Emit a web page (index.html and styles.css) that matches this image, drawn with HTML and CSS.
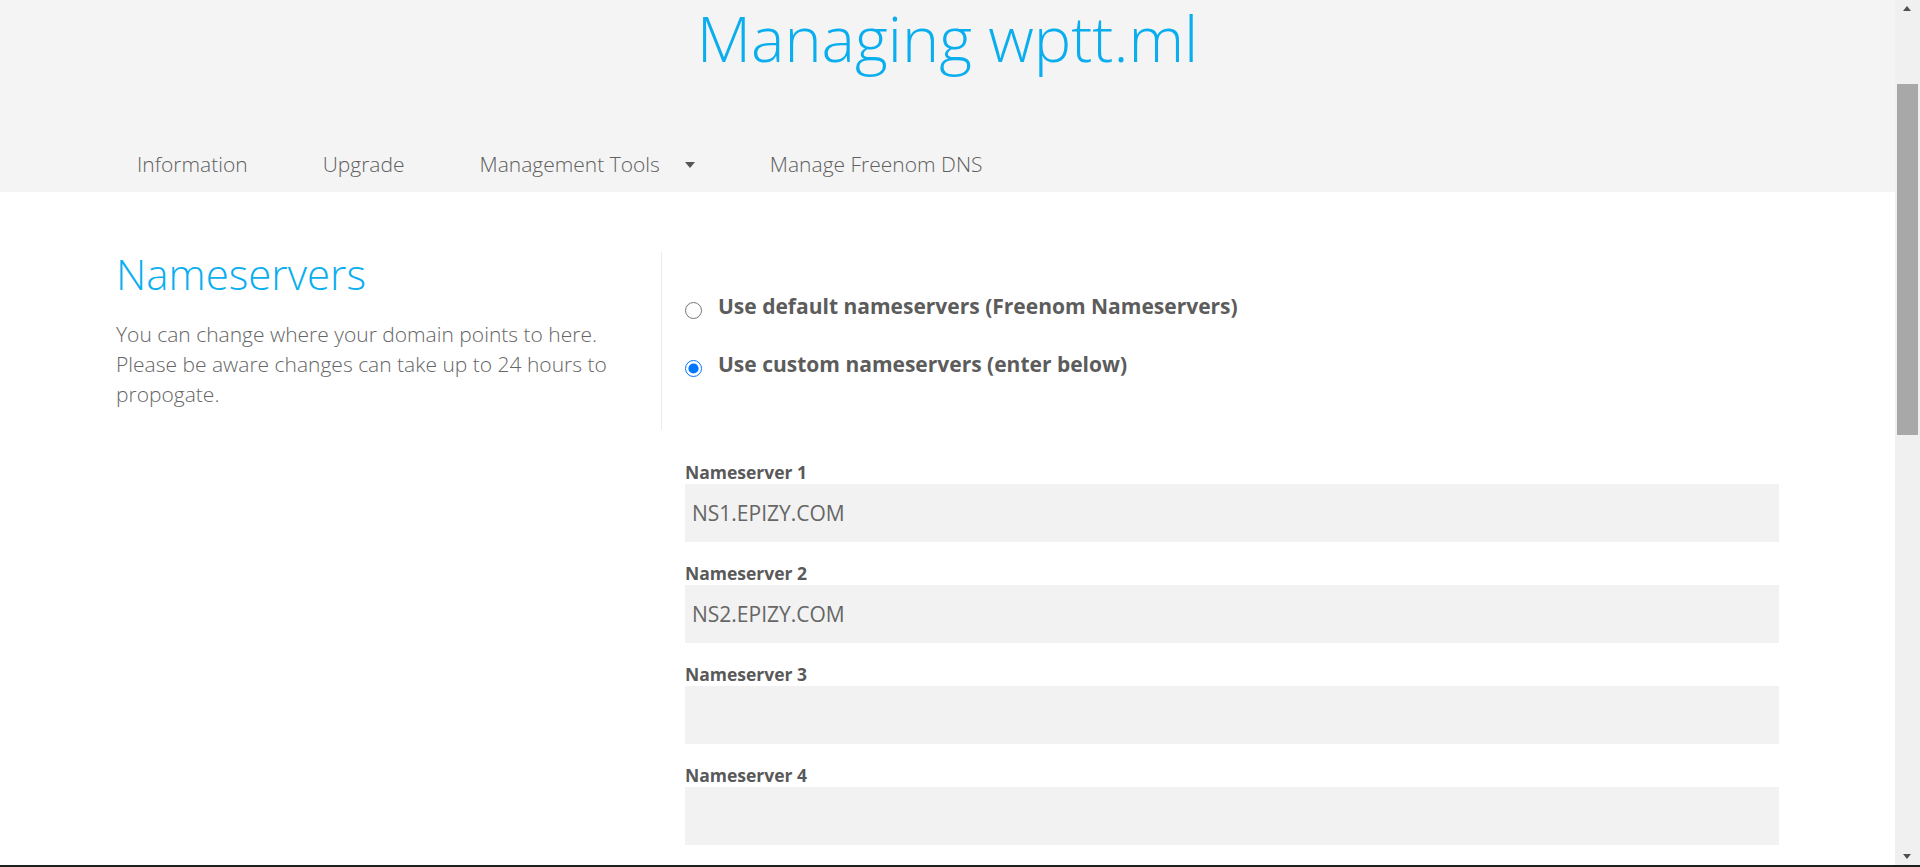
FILE: index.html
```html
<!DOCTYPE html>
<html lang="en">
<head>
<meta charset="utf-8">
<title>Managing wptt.ml</title>
<link rel="stylesheet" href="styles.css">
</head>
<body>
<div class="page">
  <header class="header">
    <h1 class="title">Managing wptt.ml</h1>
    <nav class="nav">
      <a class="nav-item" href="#">Information</a>
      <a class="nav-item" href="#">Upgrade</a>
      <a class="nav-item nav-dropdown" href="#">Management Tools <span class="caret"></span></a>
      <a class="nav-item" href="#">Manage Freenom DNS</a>
    </nav>
  </header>
  <main class="content">
    <section class="intro">
      <h2 class="intro-title">Nameservers</h2>
      <p class="intro-text">You can change where your domain points to here. Please be aware changes can take up to 24 hours to propogate.</p>
    </section>
    <section class="options">
      <label class="option">
        <input type="radio" name="nsmode" class="radio">
        <span class="option-text">Use default nameservers (Freenom Nameservers)</span>
      </label>
      <label class="option">
        <input type="radio" name="nsmode" class="radio" checked>
        <span class="option-text">Use custom nameservers (enter below)</span>
      </label>
    </section>
    <section class="fields">
      <div class="field">
        <label class="field-label">Nameserver 1</label>
        <input class="field-input" type="text" value="NS1.EPIZY.COM">
      </div>
      <div class="field">
        <label class="field-label">Nameserver 2</label>
        <input class="field-input" type="text" value="NS2.EPIZY.COM">
      </div>
      <div class="field">
        <label class="field-label">Nameserver 3</label>
        <input class="field-input" type="text" value="">
      </div>
      <div class="field">
        <label class="field-label">Nameserver 4</label>
        <input class="field-input" type="text" value="">
      </div>
    </section>
  </main>
</div>
<div class="scrollbar">
  <span class="arrow arrow-up"></span>
  <span class="thumb"></span>
  <span class="arrow arrow-down"></span>
</div>
<div class="bottom-line"></div>
</body>
</html>
```

FILE: styles.css
```css
html, body {
  margin: 0;
  padding: 0;
  height: 100%;
  overflow: hidden;
  background: #ffffff;
}

body {
  font-family: "Open Sans", "Liberation Sans", sans-serif;
  color: #666666;
}

.page {
  width: calc(100% - 25px);
}

/* Header */
.header {
  background: #f4f4f4;
  height: 192px;
  padding-top: 6px;
  box-sizing: border-box;
}

.title {
  margin: 0;
  font-size: 63px;
  line-height: 63px;
  font-weight: 300;
  color: #0aaeef;
  text-align: center;
}

.nav {
  display: flex;
  margin-top: 80px;
  padding-left: 99px;
}

.nav-item {
  display: flex;
  align-items: center;
  padding: 0 37px 0 38px;
  font-size: 21px;
  line-height: 30px;
  font-weight: 300;
  color: #5f5f5f;
  text-decoration: none;
}

.caret {
  display: inline-block;
  width: 0;
  height: 0;
  margin-left: 25px;
  margin-top: 2px;
  border-left: 5.5px solid transparent;
  border-right: 5.5px solid transparent;
  border-top: 6px solid #555555;
}

/* Content */
.content {
  display: grid;
  grid-template-columns: 546px 1fr;
  padding: 60px 116px 0 116px;
}

.intro {
  border-right: 1px solid #ececec;
  padding-right: 30px;
  padding-bottom: 21px;
}

.intro-title {
  margin: 0;
  font-size: 42px;
  line-height: 44px;
  font-weight: 300;
  color: #0aaeef;
}

.intro-text {
  margin: 23px 0 0;
  font-size: 21px;
  line-height: 30px;
  font-weight: 300;
  color: #666666;
}

.options {
  display: flex;
  flex-direction: column;
  gap: 28px;
  padding: 39px 0 51px 23px;
}

.option {
  display: flex;
  align-items: flex-start;
  font-size: 21px;
  line-height: 30px;
  font-weight: 700;
  color: #5c5c5c;
}

.radio {
  width: 17px;
  height: 17px;
  margin: 11px 16px 0 0;
  flex: none;
}

.fields {
  grid-column: 2;
  padding: 30px 0 0 23px;
  display: flex;
  flex-direction: column;
  gap: 19px;
}

.field {
  display: flex;
  flex-direction: column;
}

.field-label {
  font-size: 17.5px;
  line-height: 24px;
  font-weight: 700;
  color: #595959;
}

.field-input {
  height: 58px;
  border: none;
  background: #f2f2f2;
  padding: 0 7px;
  font-family: "Open Sans", "Liberation Sans", sans-serif;
  font-size: 21px;
  color: #666666;
  outline: none;
}

/* Fake scrollbar overlay */
.scrollbar {
  position: fixed;
  top: 0;
  right: 0;
  width: 25px;
  height: 100%;
  background: #f0f0f0;
}

.thumb {
  position: absolute;
  top: 84px;
  left: 2px;
  width: 21px;
  height: 351px;
  background: #a8a8a8;
}

.arrow {
  position: absolute;
  left: 8px;
  width: 0;
  height: 0;
  border-left: 4.5px solid transparent;
  border-right: 4.5px solid transparent;
}

.arrow-up {
  top: 6px;
  border-bottom: 5px solid #505050;
}

.arrow-down {
  bottom: 8px;
  border-top: 5px solid #505050;
}

.bottom-line {
  position: fixed;
  left: 0;
  right: 0;
  bottom: 0;
  height: 2px;
  background: #1e1e1e;
}
```
